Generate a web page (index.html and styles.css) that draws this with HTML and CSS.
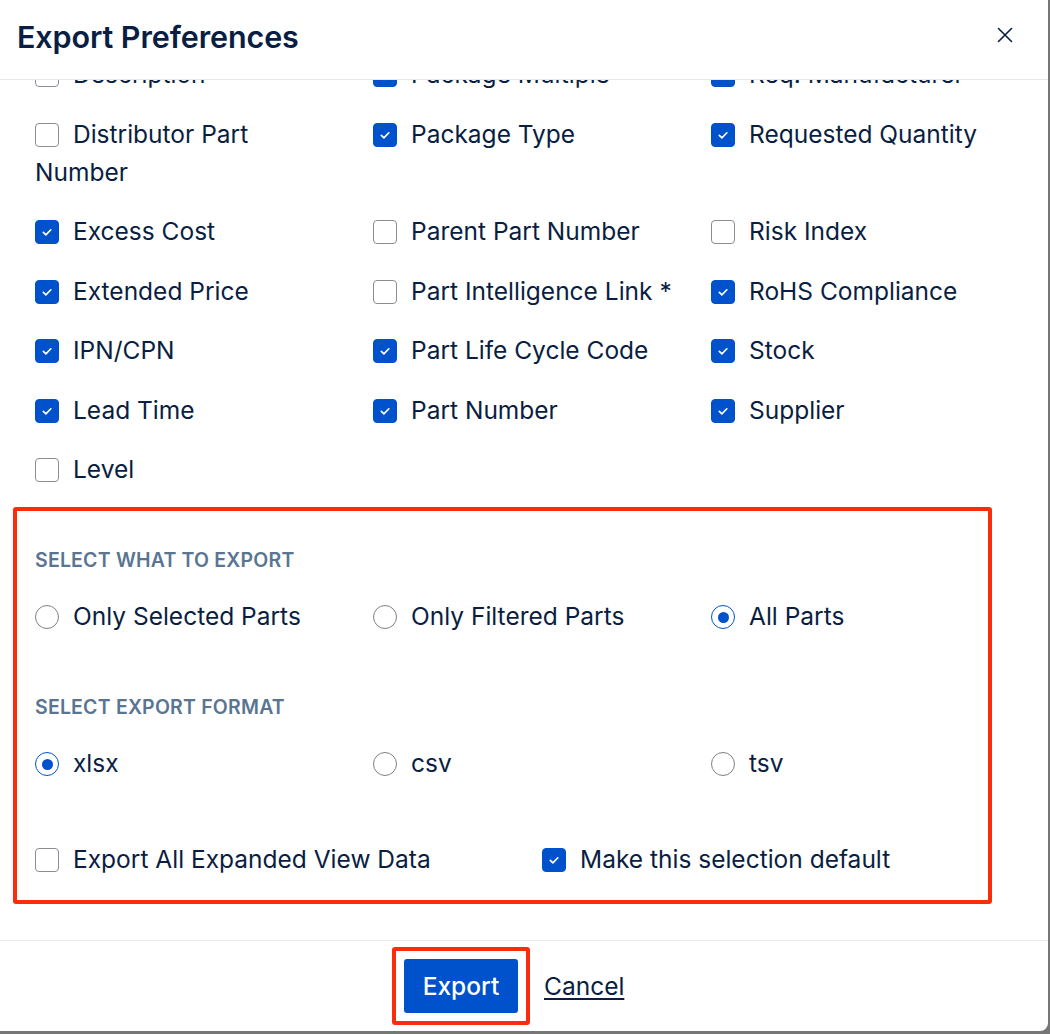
FILE: index.html
```html
<!DOCTYPE html>
<html lang="en">
<head>
<meta charset="utf-8">
<title>Export Preferences</title>
<link rel="stylesheet" href="styles.css">
</head>
<body>
<div class="modal">
  <header class="modal-header">
    <h1 class="title">Export Preferences</h1>
    <button class="close" aria-label="Close">
      <svg width="16" height="16" viewBox="0 0 16 16"><path d="M1.5 1.5L14.5 14.5M14.5 1.5L1.5 14.5" stroke="#091e42" stroke-width="1.6" stroke-linecap="round"/></svg>
    </button>
  </header>
  <div class="modal-body">
    <div class="fields">
      <label class="opt"><span class="box"></span>Description</label>
      <label class="opt"><span class="box on"><svg viewBox="0 0 24 24"><path d="M8 12.4l2.8 2.8 5.4-5.6"/></svg></span>Package Multiple</label>
      <label class="opt"><span class="box on"><svg viewBox="0 0 24 24"><path d="M8 12.4l2.8 2.8 5.4-5.6"/></svg></span>Req. Manufacturer</label>

      <label class="opt"><span class="box"></span>Distributor Part Number</label>
      <label class="opt"><span class="box on"><svg viewBox="0 0 24 24"><path d="M8 12.4l2.8 2.8 5.4-5.6"/></svg></span>Package Type</label>
      <label class="opt"><span class="box on"><svg viewBox="0 0 24 24"><path d="M8 12.4l2.8 2.8 5.4-5.6"/></svg></span>Requested Quantity</label>

      <label class="opt"><span class="box on"><svg viewBox="0 0 24 24"><path d="M8 12.4l2.8 2.8 5.4-5.6"/></svg></span>Excess Cost</label>
      <label class="opt"><span class="box"></span>Parent Part Number</label>
      <label class="opt"><span class="box"></span>Risk Index</label>

      <label class="opt"><span class="box on"><svg viewBox="0 0 24 24"><path d="M8 12.4l2.8 2.8 5.4-5.6"/></svg></span>Extended Price</label>
      <label class="opt"><span class="box"></span>Part Intelligence Link *</label>
      <label class="opt"><span class="box on"><svg viewBox="0 0 24 24"><path d="M8 12.4l2.8 2.8 5.4-5.6"/></svg></span>RoHS Compliance</label>

      <label class="opt"><span class="box on"><svg viewBox="0 0 24 24"><path d="M8 12.4l2.8 2.8 5.4-5.6"/></svg></span>IPN/CPN</label>
      <label class="opt"><span class="box on"><svg viewBox="0 0 24 24"><path d="M8 12.4l2.8 2.8 5.4-5.6"/></svg></span>Part Life Cycle Code</label>
      <label class="opt"><span class="box on"><svg viewBox="0 0 24 24"><path d="M8 12.4l2.8 2.8 5.4-5.6"/></svg></span>Stock</label>

      <label class="opt"><span class="box on"><svg viewBox="0 0 24 24"><path d="M8 12.4l2.8 2.8 5.4-5.6"/></svg></span>Lead Time</label>
      <label class="opt"><span class="box on"><svg viewBox="0 0 24 24"><path d="M8 12.4l2.8 2.8 5.4-5.6"/></svg></span>Part Number</label>
      <label class="opt"><span class="box on"><svg viewBox="0 0 24 24"><path d="M8 12.4l2.8 2.8 5.4-5.6"/></svg></span>Supplier</label>

      <label class="opt"><span class="box"></span>Level</label>
    </div>

    <section class="highlight">
      <h2 class="group-title">Select what to export</h2>
      <div class="radios">
        <label class="opt"><span class="radio"></span>Only Selected Parts</label>
        <label class="opt"><span class="radio"></span>Only Filtered Parts</label>
        <label class="opt"><span class="radio on"></span>All Parts</label>
      </div>

      <h2 class="group-title second">Select export format</h2>
      <div class="radios">
        <label class="opt"><span class="radio on"></span>xlsx</label>
        <label class="opt"><span class="radio"></span>csv</label>
        <label class="opt"><span class="radio"></span>tsv</label>
      </div>

      <div class="extras">
        <label class="opt"><span class="box"></span>Export All Expanded View Data</label>
        <label class="opt"><span class="box on"><svg viewBox="0 0 24 24"><path d="M8 12.4l2.8 2.8 5.4-5.6"/></svg></span>Make this selection default</label>
      </div>
    </section>
  </div>
  <footer class="modal-footer">
    <div class="btn-mark">
      <button class="btn-primary">Export</button>
    </div>
    <a class="cancel" href="#">Cancel</a>
  </footer>
</div>
</body>
</html>
```

FILE: styles.css
```css
html, body {
  margin: 0;
  padding: 0;
  background: #767676;
}

body {
  width: 1050px;
  height: 1034px;
  overflow: hidden;
  font-family: Inter, "Noto Sans", "Liberation Sans", sans-serif;
  color: #091e42;
}

.modal {
  width: 1048px;
  height: 1031px;
  background: #ffffff;
  border-bottom-right-radius: 8px;
  display: flex;
  flex-direction: column;
  overflow: hidden;
}

.modal-header {
  flex: none;
  height: 80px;
  box-sizing: border-box;
  border-bottom: 1px solid #e6e8eb;
  display: flex;
  align-items: center;
  justify-content: space-between;
  padding: 0 35px 6px 17px;
}

.title {
  margin: 0;
  font-size: 30.5px;
  font-weight: 600;
  letter-spacing: -0.1px;
  color: #091e42;
}

.close {
  border: 0;
  background: none;
  padding: 0;
  width: 16px;
  height: 16px;
  display: flex;
  margin-bottom: 4px;
  cursor: pointer;
}

.modal-body {
  flex: 1;
  overflow: hidden;
  border-bottom: 1px solid #e6e8eb;
}

.fields {
  margin-top: -25px;
  padding-left: 35px;
  display: grid;
  grid-template-columns: 338px 338px 338px;
  row-gap: 21.5px;
}

.opt {
  display: block;
  font-size: 24.5px;
  line-height: 38px;
  max-width: 305px;
  color: #091e42;
}

.box {
  display: inline-block;
  box-sizing: border-box;
  width: 24px;
  height: 24px;
  border: 1px solid #8a8d93;
  border-radius: 4px;
  background: #fff;
  vertical-align: -4px;
  margin-right: 14px;
  position: relative;
}

.box.on {
  background: #0052cc;
  border-color: #0052cc;
}

.box svg {
  display: block;
  width: 22px;
  height: 22px;
  fill: none;
  stroke: #ffffff;
  stroke-width: 1.8;
  stroke-linecap: round;
  stroke-linejoin: round;
}

.radio {
  display: inline-block;
  box-sizing: border-box;
  width: 24px;
  height: 24px;
  border: 1px solid #7d8087;
  border-radius: 50%;
  background: #fff;
  vertical-align: -4px;
  margin-right: 14px;
  position: relative;
}

.radio.on {
  border-color: #0052cc;
}

.radio.on::after {
  content: "";
  position: absolute;
  left: 5.5px;
  top: 5.5px;
  width: 11px;
  height: 11px;
  border-radius: 50%;
  background: #0052cc;
}

.highlight {
  margin: 19px 0 0 13px;
  width: 979px;
  box-sizing: border-box;
  border: 4px solid #fb2c0c;
  border-radius: 3px;
  padding: 37px 0 22px 18px;
}

.group-title {
  margin: 0;
  font-size: 19.5px;
  line-height: 24px;
  font-weight: 600;
  letter-spacing: 0.2px;
  text-transform: uppercase;
  color: #5a7591;
}

.group-title.second {
  margin-top: 60px;
}

.radios {
  margin-top: 25px;
  display: grid;
  grid-template-columns: 338px 338px 1fr;
}

.extras {
  margin-top: 58px;
  display: grid;
  grid-template-columns: 507px 1fr;
}

.extras .opt {
  max-width: none;
}

.modal-footer {
  flex: none;
  height: 90px;
  box-sizing: border-box;
  display: flex;
  align-items: flex-start;
  padding: 6px 0 0 392px;
  gap: 14px;
}

.btn-mark {
  border: 4px solid #fb2c0c;
  border-radius: 3px;
  padding: 8px;
}

.btn-primary {
  display: block;
  width: 114px;
  height: 54px;
  border: 0;
  border-radius: 3px;
  background: #0052cc;
  color: #ffffff;
  font-family: Inter, "Noto Sans", "Liberation Sans", sans-serif;
  font-size: 24.5px;
  font-weight: 500;
  cursor: pointer;
}

.cancel {
  margin-top: 24px;
  font-size: 24.5px;
  line-height: 30px;
  color: #091e42;
  text-decoration: underline;
  text-underline-offset: 3px;
}
```
